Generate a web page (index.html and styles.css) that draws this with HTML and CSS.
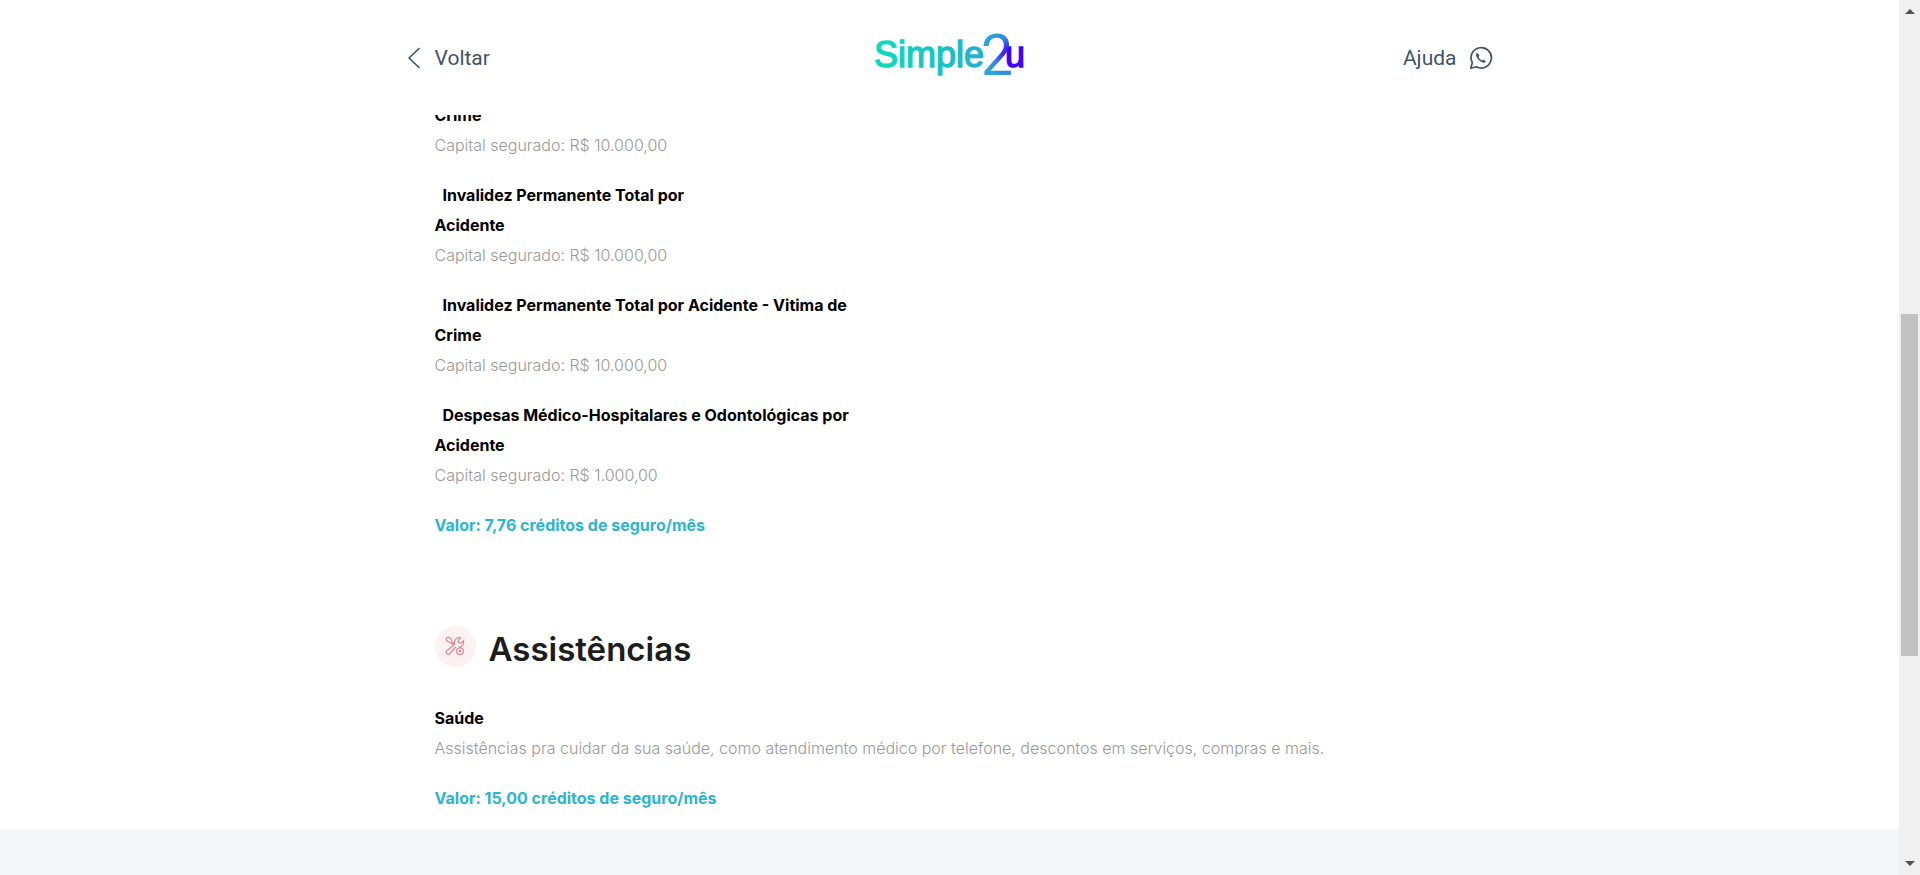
FILE: index.html
```html
<!DOCTYPE html>
<html lang="pt-BR">
<head>
<meta charset="utf-8">
<meta name="viewport" content="width=device-width, initial-scale=1">
<title>Simple2u</title>
<link rel="stylesheet" href="styles.css">
</head>
<body>
<div class="window">
  <div class="page">
    <header class="header">
      <div class="header-inner">
        <a class="header-link" href="#voltar">
          <svg class="chevron" width="14" height="22" viewBox="0 0 14 22" fill="none" stroke="currentColor" stroke-width="1.7" stroke-linecap="round" stroke-linejoin="round" aria-hidden="true"><path d="M12 1.5 2 11l10 9.5"/></svg>
          Voltar
        </a>
        <svg class="logo" width="150" height="46" viewBox="0 0 150 46" role="img" aria-label="Simple2u">
          <defs>
            <linearGradient id="word" gradientUnits="userSpaceOnUse" x1="0" y1="0" x2="110" y2="0">
              <stop offset="0" stop-color="#0bdcbb"/><stop offset="1" stop-color="#24afd0"/>
            </linearGradient>
            <radialGradient id="two" gradientUnits="userSpaceOnUse" cx="135" cy="22" r="27">
              <stop offset="0" stop-color="#3c00ff"/><stop offset=".25" stop-color="#3a2cec"/><stop offset=".6" stop-color="#3487de"/><stop offset="1" stop-color="#2ba8d2"/>
            </radialGradient>
          </defs>
          <text class="logo-word" x="-1" y="35" fill="url(#word)" stroke="url(#word)">Simple</text>
          <text class="logo-word" x="130" y="35" fill="#3c00ff" stroke="#3c00ff">u</text>
          <text class="logo-two" x="106" y="43" fill="url(#two)">2</text>
        </svg>
        <a class="header-link header-help" href="#ajuda">
          Ajuda
          <svg width="24" height="24" viewBox="0 0 24 24" fill="none" stroke="currentColor" stroke-width="1.7" stroke-linejoin="round" aria-hidden="true"><path d="M1.8 22.2 3.3 16.700A10.200 10.200 0 1 1 7.300 20.700Z"/><path d="M8.300 6.800C6.200 8.200 6.900 11 9.800 14c3 2.900 5.800 3.500 7.200 1.500l-2.400-2-1.500 1c-1.400-.6-2.900-2.100-3.500-3.500l.9-1.500Z" fill="currentColor" stroke="none"/></svg>
        </a>
      </div>
    </header>
    <main class="main">
      <div class="content">
        <section class="section">
          <article class="item"><h3 class="item-title">Crime</h3><p class="item-text">Capital segurado: R$ 10.000,00</p></article>
          <article class="item"><h3 class="item-title indented">Invalidez Permanente Total por<br>Acidente</h3><p class="item-text">Capital segurado: R$ 10.000,00</p></article>
          <article class="item"><h3 class="item-title indented">Invalidez Permanente Total por Acidente - Vitima de<br>Crime</h3><p class="item-text">Capital segurado: R$ 10.000,00</p></article>
          <article class="item"><h3 class="item-title indented">Despesas Médico-Hospitalares e Odontológicas por<br>Acidente</h3><p class="item-text">Capital segurado: R$ 1.000,00</p></article>
          <p class="price">Valor: 7,76 créditos de seguro/mês</p>
        </section>
        <section class="section">
          <div class="section-head">
            <span class="badge">
              <svg width="20" height="20" viewBox="0 0 20 20" fill="none" stroke="#db8d98" stroke-width="1.300" stroke-linecap="round" stroke-linejoin="round" aria-hidden="true"><path d="M8.300 8.800 6.200 6.800C4.500 6.600 1 5 1.300 3c.3-1.600 2.300-2.200 3.500-1.200C6.500 3 7 4.500 7.200 6l2 2.200"/><path d="M10.500 11.200 5 17.500c-2 2.200-5-.5-3.200-2.600L9.500 8.200C8.800 4 12 .8 15.800 1.600l-2.500 2.800.5 2.200 2.200.6 2.500-2.600c.8 3-1 6-4.300 6.600"/><circle cx="15" cy="15.300" r="3.400"/><circle cx="15" cy="15.300" r=".8"/></svg>
            </span>
            <h2 class="section-title">Assistências</h2>
          </div>
          <article class="item"><h3 class="item-title">Saúde</h3><p class="item-text">Assistências pra cuidar da sua saúde, como atendimento médico por telefone, descontos em serviços, compras e mais.</p></article>
          <p class="price">Valor: 15,00 créditos de seguro/mês</p>
        </section>
      </div>
    </main>
    <footer class="footer"></footer>
  </div>
  <div class="scrollbar" aria-hidden="true">
    <svg width="10" height="5" viewBox="0 0 10 5"><path d="M0 5 5 0l5 5Z" fill="#505050"/></svg>
    <div class="track"><div class="thumb"></div></div>
    <svg width="10" height="5" viewBox="0 0 10 5"><path d="M0 0 5 5l5-5Z" fill="#505050"/></svg>
  </div>
</div>
</body>
</html>
```
FILE: styles.css
```css
* { box-sizing: border-box; }
body, h2, h3, p { margin: 0; }
body {
  background: #fff;
  font-family: Inter, "Liberation Sans", sans-serif;
  font-size: 16px;
  line-height: 30px;
}
.window { display: flex; height: 100vh; }
.page { flex: 1; min-width: 0; display: flex; flex-direction: column; }

.header { flex: none; padding: 32px 24px 37px; }
.header-inner {
  display: grid;
  grid-template-columns: 1fr auto 1fr;
  align-items: center;
  max-width: 1086px;
  margin: 0 auto;
}
.header-link {
  display: flex;
  align-items: center;
  gap: 14px;
  padding-top: 6px;
  color: #3f5467;
  font-family: Roboto, sans-serif;
  font-size: 21px;
  text-decoration: none;
}
.header-help { justify-content: flex-end; gap: 12px; }
.logo { display: block; overflow: visible; }
.logo-word { font: 400 36px "Liberation Sans", sans-serif; stroke-width: 1.4px; }
.logo-two { font: 400 57px Roboto, sans-serif; }

.main {
  flex: 1;
  min-height: 0;
  display: flex;
  flex-direction: column;
  justify-content: flex-end;
  overflow: hidden;
}
.content {
  width: 100%;
  max-width: 1086px;
  margin: 0 auto;
  padding: 0 28px 16px;
}
.section + .section { margin-top: 81px; }
.item { margin-bottom: 20px; }
.item-title { color: #000; font-size: 16px; font-weight: 700; }
.indented { text-indent: 8px; }
.item-text { color: #999; font-weight: 300; }
.price { color: #2cb4d0; font-weight: 700; }
.section-head { display: flex; align-items: center; gap: 13px; margin-bottom: 32px; }
.badge {
  display: flex;
  align-items: center;
  justify-content: center;
  width: 41px;
  height: 41px;
  border-radius: 50%;
  background: #fdf2f3;
}
.section-title { padding-top: 6px; color: #1d1d1d; font-size: 33px; font-weight: 600; line-height: 44px; }
.footer { flex: none; height: 46px; background: #f4f6fa; }

.scrollbar {
  flex: none;
  display: flex;
  flex-direction: column;
  align-items: center;
  width: 21px;
  padding: 9px 0;
  background: #f0f0f0;
}
.track { flex: 1; width: 17px; padding-top: 300px; }
.thumb { height: 342px; background: #c1c1c1; }
```
